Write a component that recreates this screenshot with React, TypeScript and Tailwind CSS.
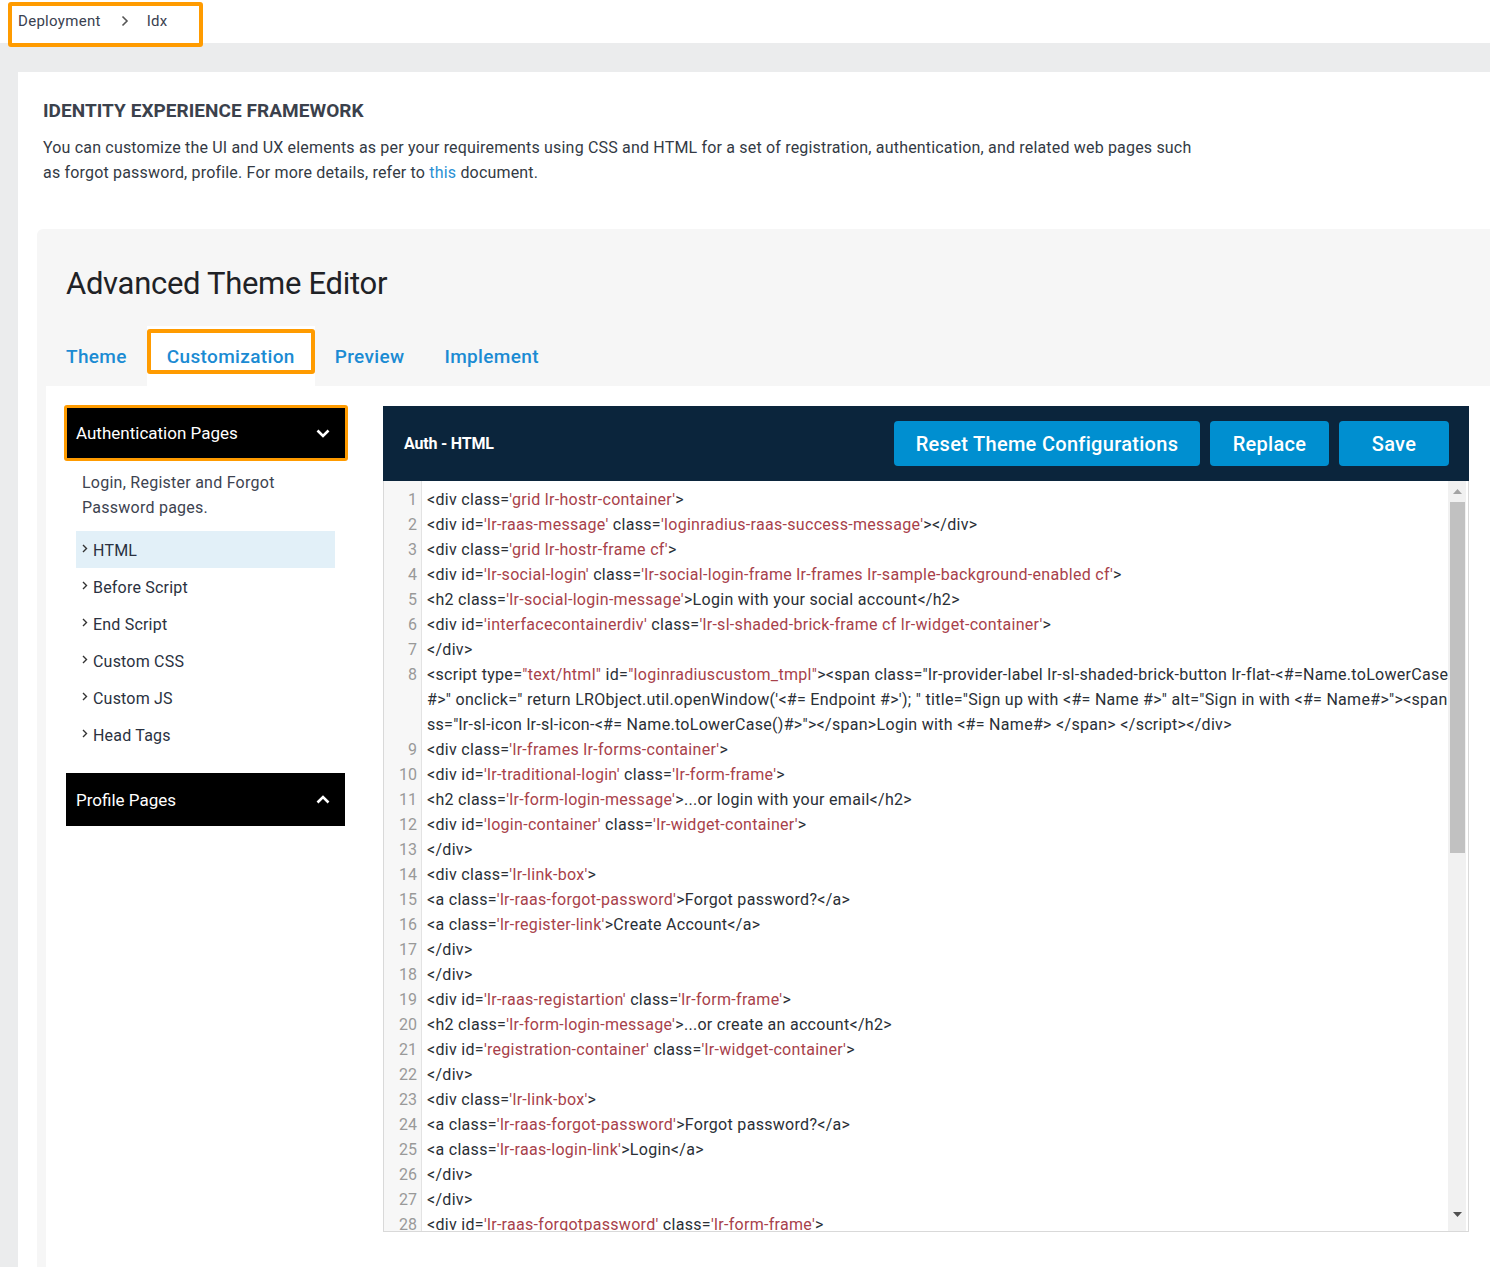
import React from "react";

const RED = "text-[#a8414a]";

function tokenize(s: string) {
  const parts = s.split(/('[^']*'|"[^"]*")/);
  return parts.map((p, i) =>
    i % 2 === 1 ? (
      <span key={i} className={RED}>
        {p}
      </span>
    ) : (
      <span key={i}>{p}</span>
    )
  );
}

const lines: string[] = [
  "<div class='grid lr-hostr-container'>",
  "<div id='lr-raas-message' class='loginradius-raas-success-message'></div>",
  "<div class='grid lr-hostr-frame cf'>",
  "<div id='lr-social-login' class='lr-social-login-frame lr-frames lr-sample-background-enabled cf'>",
  "<h2 class='lr-social-login-message'>Login with your social account</h2>",
  "<div id='interfacecontainerdiv' class='lr-sl-shaded-brick-frame cf lr-widget-container'>",
  "</div>",
  "__SCRIPT__",
  "<div class='lr-frames lr-forms-container'>",
  "<div id='lr-traditional-login' class='lr-form-frame'>",
  "<h2 class='lr-form-login-message'>...or login with your email</h2>",
  "<div id='login-container' class='lr-widget-container'>",
  "</div>",
  "<div class='lr-link-box'>",
  "<a class='lr-raas-forgot-password'>Forgot password?</a>",
  "<a class='lr-register-link'>Create Account</a>",
  "</div>",
  "</div>",
  "<div id='lr-raas-registartion' class='lr-form-frame'>",
  "<h2 class='lr-form-login-message'>...or create an account</h2>",
  "<div id='registration-container' class='lr-widget-container'>",
  "</div>",
  "<div class='lr-link-box'>",
  "<a class='lr-raas-forgot-password'>Forgot password?</a>",
  "<a class='lr-raas-login-link'>Login</a>",
  "</div>",
  "</div>",
  "<div id='lr-raas-forgotpassword' class='lr-form-frame'>",
];

function ChevronRight() {
  return (
    <svg width="6" height="9" viewBox="0 0 6 9" className="mr-[5px] mt-[-3px]">
      <path d="M1 1 L4.5 4.5 L1 8" fill="none" stroke="#333" strokeWidth="1.4" />
    </svg>
  );
}

function Chevron({ up }: { up?: boolean }) {
  return (
    <svg width="14" height="9" viewBox="0 0 14 9">
      <path
        d={up ? "M1.5 7.5 L7 2 L12.5 7.5" : "M1.5 1.5 L7 7 L12.5 1.5"}
        fill="none"
        stroke="#fff"
        strokeWidth="2.6"
      />
    </svg>
  );
}

function Gutter({ num, h }: { num: number; h: string }) {
  return (
    <div
      className={`w-[38px] shrink-0 bg-[#f7f7f7] border-r border-[#e3e3e3] text-right pr-[4px] text-[16px] leading-[25px] text-[#999] ${h}`}
    >
      {num}
    </div>
  );
}

export default function App() {
  const navItems = ["HTML", "Before Script", "End Script", "Custom CSS", "Custom JS", "Head Tags"];
  const tabs = ["Theme", "Customization", "Preview", "Implement"];
  return (
    <div
      className="h-[1267px] w-full overflow-hidden bg-[#ebeced] flex flex-col"
      style={{ fontFamily: "Roboto, 'Noto Sans', sans-serif" }}
    >
      {/* Top breadcrumb bar */}
      <div className="h-[43px] bg-white relative flex items-center pl-[18px] shrink-0">
        <div className="flex items-center text-[15px] text-[#3a4150] tracking-[0.3px]">
          <span>Deployment</span>
          <svg width="8" height="12" viewBox="0 0 8 12" className="ml-[20px] mr-[18px] mt-[-2px]">
            <path d="M1.5 1.5 L6 6 L1.5 10.5" fill="none" stroke="#555" strokeWidth="1.6" />
          </svg>
          <span>Idx</span>
        </div>
        <div className="absolute left-[8px] top-[2px] w-[195px] h-[45px] border-[4px] border-[#ff9b00] rounded-[3px] pointer-events-none" />
      </div>

      {/* card */}
      <div className="flex-1 flex flex-col pt-[29px] pl-[18px] min-h-0">
        <div className="flex-1 bg-white flex flex-col min-h-0">
          <div className="pl-[25px] pt-[25px]">
            <h1 className="text-[19px] leading-[28px] font-bold text-[#3b414c] tracking-[0.05px]">
              IDENTITY EXPERIENCE FRAMEWORK
            </h1>
            <p className="mt-[10px] text-[16px] leading-[25px] text-[#333a44] tracking-[0.18px]">
              You can customize the UI and UX elements as per your requirements using CSS and HTML for a set of
              registration, authentication, and related web pages such
              <br />
              as forgot password, profile. For more details, refer to{" "}
              <a className="text-[#2a8fd4]">this</a> document.
            </p>
          </div>

          {/* gray panel */}
          <div className="mt-[44px] ml-[19px] flex-1 bg-[#f6f6f6] rounded-tl-[6px] flex flex-col pl-[9px] min-h-0">
            <h2 className="pl-[20px] pt-[35px] text-[31px] leading-[40px] text-[#1f2226] font-normal tracking-[-0.3px]">
              Advanced Theme Editor
            </h2>
            <div className="mt-[22px] flex h-[60px]">
              {tabs.map((t) => {
                const active = t === "Customization";
                return (
                  <div
                    key={t}
                    className={`relative h-full px-[20px] flex items-center text-[19px] font-medium text-[#1b8bd3] tracking-[0.35px] ${
                      active ? "bg-white" : ""
                    }`}
                  >
                    <span className="mt-[2px]">{t}</span>
                    {active && (
                      <div className="absolute left-0 right-0 top-[3px] h-[45px] border-[4px] border-[#ff9b00] rounded-[3px] pointer-events-none" />
                    )}
                  </div>
                );
              })}
            </div>

            {/* content */}
            <div className="flex-1 bg-white flex pl-[20px] pt-[20px] gap-[38px] min-h-0">
              {/* sidebar */}
              <div className="w-[279px] shrink-0">
                <div className="relative h-[54px] bg-black flex items-center justify-between pl-[10px] pr-[15px]">
                  <span className="text-white text-[17px] mt-[2px]">Authentication Pages</span>
                  <Chevron />
                  <div className="absolute -left-[2px] -top-[1px] -right-[3px] -bottom-[1px] border-[3px] border-[#ff9b00] rounded-[3px] pointer-events-none" />
                </div>
                <p className="mt-[10px] pl-[16px] w-[240px] text-[16px] leading-[25px] text-[#3d4350] tracking-[0.25px]">
                  Login, Register and Forgot Password pages.
                </p>
                <div className="mt-[11px] flex flex-col">
                  {navItems.map((n) => (
                    <div
                      key={n}
                      className={`h-[37px] mx-[10px] pl-[6px] flex items-center text-[16px] text-[#2a3140] tracking-[0.2px] ${
                        n === "HTML" ? "bg-[#e2f0f8]" : ""
                      }`}
                    >
                      <ChevronRight />
                      <span className="mt-[2px]">{n}</span>
                    </div>
                  ))}
                </div>
                <div className="mt-[20px] h-[53px] bg-black flex items-center justify-between pl-[10px] pr-[15px]">
                  <span className="text-white text-[17px] mt-[2px]">Profile Pages</span>
                  <Chevron up />
                </div>
              </div>

              {/* editor */}
              <div className="w-[1086px] shrink-0 flex flex-col">
                <div className="h-[75px] bg-[#0b253c] flex items-center justify-between pl-[21px] pr-[20px]">
                  <span className="text-white text-[16px] font-bold tracking-[-0.2px]">Auth - HTML</span>
                  <div className="flex gap-[10px]">
                    <button className="w-[306px] h-[45px] rounded-[4px] bg-[#008fd0] text-white text-[20px] font-medium tracking-[0.3px]">
                      Reset Theme Configurations
                    </button>
                    <button className="w-[119px] h-[45px] rounded-[4px] bg-[#008fd0] text-white text-[20px] font-medium tracking-[0.3px]">
                      Replace
                    </button>
                    <button className="w-[110px] h-[45px] rounded-[4px] bg-[#008fd0] text-white text-[20px] font-medium tracking-[0.3px]">
                      Save
                    </button>
                  </div>
                </div>
                <div className="h-[751px] border-l border-r border-b border-[#d9d9d9] flex overflow-hidden">
                  <div className="flex-1 min-w-0 overflow-hidden flex flex-col">
                    <div className="h-[6px] shrink-0 flex">
                      <div className="w-[38px] shrink-0 bg-[#f7f7f7] border-r border-[#e3e3e3]" />
                    </div>
                    {lines.map((l, i) => {
                      const num = i + 1;
                      if (l === "__SCRIPT__") {
                        return (
                          <div key={i} className="flex shrink-0">
                            <Gutter num={num} h="h-[75px]" />
                            <div className="flex-1 min-w-0 pl-[5px] text-[16px] leading-[25px] text-[#2a2f36] whitespace-nowrap overflow-hidden tracking-[0.3px]">
                              <div className="overflow-hidden">
                                {"<script type="}
                                <span className={RED}>"text/html"</span>
                                {" id="}
                                <span className={RED}>"loginradiuscustom_tmpl"</span>
                                {'><span class="lr-provider-label lr-sl-shaded-brick-button lr-flat-<#=Name.toLowerCase()'}
                              </div>
                              <div className="overflow-hidden">
                                {'#>" onclick=" return LRObject.util.openWindow(\'<#= Endpoint #>\'); " title="Sign up with <#= Name #>" alt="Sign in with <#= Name#>"><span cla'}
                              </div>
                              <div className="overflow-hidden">
                                {'ss="lr-sl-icon lr-sl-icon-<#= Name.toLowerCase()#>"></span>Login with <#= Name#> </span> </script></div>'}
                              </div>
                            </div>
                          </div>
                        );
                      }
                      return (
                        <div key={i} className="flex shrink-0">
                          <Gutter num={num} h="h-[25px]" />
                          <div className="flex-1 min-w-0 pl-[5px] text-[16px] leading-[25px] text-[#2a2f36] whitespace-nowrap overflow-hidden tracking-[0.3px]">
                            {tokenize(l)}
                          </div>
                        </div>
                      );
                    })}
                  </div>
                  {/* scrollbar */}
                  <div className="w-[18px] shrink-0 bg-[#f1f1f1] flex flex-col items-center">
                    <div className="h-[21px] flex items-center justify-center">
                      <svg width="9" height="5" viewBox="0 0 9 5">
                        <path d="M0 5 L4.5 0 L9 5 Z" fill="#a3a3a3" />
                      </svg>
                    </div>
                    <div className="w-[15px] h-[351px] bg-[#c1c1c1]" />
                    <div className="flex-1" />
                    <div className="h-[21px] flex items-center justify-center mb-[6px]">
                      <svg width="9" height="5" viewBox="0 0 9 5">
                        <path d="M0 0 L9 0 L4.5 5 Z" fill="#505050" />
                      </svg>
                    </div>
                  </div>
                  <div className="w-[2px] shrink-0 bg-white" />
                </div>
              </div>
            </div>
          </div>
        </div>
      </div>
    </div>
  );
}
